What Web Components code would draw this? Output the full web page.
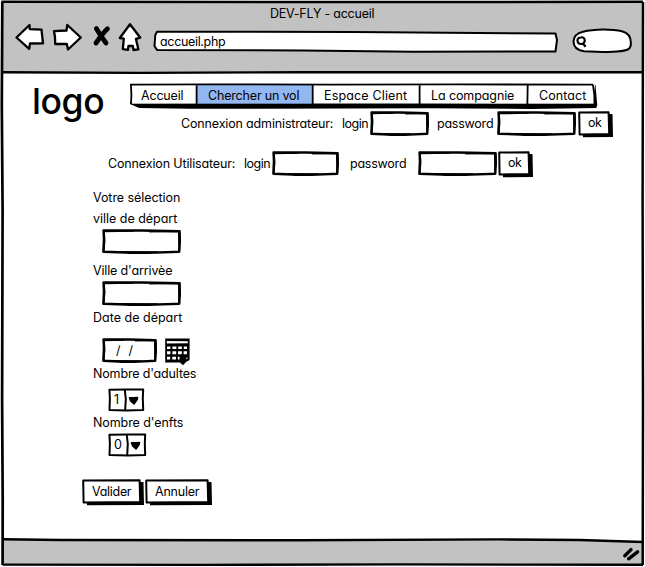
<!DOCTYPE html>
<html lang="fr">
<head>
<meta charset="utf-8">
<title>DEV-FLY - accueil</title>
<style>
html, body { margin: 0; background: #fff; overflow: hidden; }
body { font-family: Inter, "Noto Sans", sans-serif; font-size: 13px; color: #000; font-feature-settings: "cv11"; }
</style>
</head>
<body>
<wire-page></wire-page>
<script>
const num = (el, name, d = 0) => parseFloat(el.getAttribute(name) ?? d);

/* Label fitted to a given width through its letter spacing */
class WireText extends HTMLElement {
  connectedCallback() {
    const size = num(this, 'size', 12.5), w = num(this, 'w'), lh = num(this, 'lh', 16);
    const root = this.attachShadow({ mode: 'open' });
    root.innerHTML = `<style>
      :host { display: block; flex: none; width: ${w}px; height: ${lh}px; font-size: ${size}px; line-height: ${lh}px; white-space: pre; }
      span { display: inline-block; margin-top: 1px; }
    </style><span><slot></slot></span>`;
    const span = root.querySelector('span');
    const n = this.textContent.length;
    const natural = span.getBoundingClientRect().width;
    span.style.letterSpacing = ((w + .3 - natural) / n) + 'px';
  }
}

/* Hand-drawn text field */
class WireField extends HTMLElement {
  connectedCallback() {
    const w = num(this, 'w'), h = num(this, 'h', 25);
    this.attachShadow({ mode: 'open' }).innerHTML = `<style>
      :host { display: grid; flex: none; width: ${w}px; height: ${h}px; }
      svg, div { grid-area: 1 / 1; }
      div { display: flex; align-items: center; }
      ::slotted(*) { margin-top: -2px; }
    </style>
    <svg width="${w}" height="${h}" fill="none" stroke="#000" stroke-width="2.5" stroke-linejoin="round">
      <path fill="#fff" d="M1.6 1.6 L${w * .5} 1.5 L${w - 1.4} 2.2 L${w - 1.2} ${h * .5} L${w - 1.8} ${h - 2.2} Q${w * .5} ${h - .6} ${w * .3} ${h - 1.5} L1.4 ${h - 2.3} L2 ${h * .4}Z"/>
      <path stroke-width="1.7" d="M2 2.5 L${w * .4} 1.9 M2 3 L2.5 ${h * .5} L1.7 ${h - 3} M${w * .6} 2.6 L${w - 2} 2.1 M${w - 2.2} 3 L${w - 1.8} ${h - 3} M${w * .2} ${h - 2.2} L${w * .7} ${h - 1.9}"/>
    </svg><div><slot></slot></div>`;
  }
}

/* Button with a solid offset shadow */
class WireButton extends HTMLElement {
  connectedCallback() {
    const w = num(this, 'w'), h = 27;
    this.attachShadow({ mode: 'open' }).innerHTML = `<style>
      :host { display: grid; flex: none; width: ${w}px; height: ${h}px; }
      svg, div { grid-area: 1 / 1; }
      div { padding: ${num(this, 'py', 4)}px 0 0 ${num(this, 'px', 10)}px; }
    </style>
    <svg width="${w}" height="${h}">
      <path d="M4.5 4 L${w - .5} 3 L${w} ${h - 1} L5 ${h - .8}Z"/>
      <path d="M1.2 1.5 L${w - 4.4} 1.2 L${w - 3.8} ${h - 4} L1.6 ${h - 3.6}Z" fill="#fff" stroke="#000" stroke-width="2" stroke-linejoin="round"/>
    </svg><div><slot></slot></div>`;
  }
}

/* Small number selector with a drop-down arrow */
class WireSelect extends HTMLElement {
  connectedCallback() {
    const w = num(this, 'w');
    const d = num(this, 'split');
    this.attachShadow({ mode: 'open' }).innerHTML = `<style>
      :host { display: grid; flex: none; width: ${w}px; height: 24px; }
      svg, div { grid-area: 1 / 1; }
      div { padding: 3px 0 0 6px; }
    </style>
    <svg width="${w}" height="24" stroke="#000" stroke-width="2" stroke-linejoin="round">
      <path fill="#fff" d="M1.4 1.8 L${w * .5} 1.6 L${w - 1.8} 1.6 L${w - 2.2} 10 L${w - 1.8} 22 L${w * .5} 22.4 L1.5 22 L1.9 10Z"/>
      <path fill="none" d="M${d - 1.2} 2 L${d - .2} 11 L${d - .8} 22"/>
      <path stroke-width="1.4" d="M${d + 3.4} 9.8 L${d + 7} 9.8 L${d + 11.6} 9.4 L${d + 11.2} 11.5 L${d + 8} 16 L${d + 4.6} 13Z"/>
    </svg><div><slot></slot></div>`;
  }
}

class WireCalendar extends HTMLElement {
  connectedCallback() {
    this.attachShadow({ mode: 'open' }).innerHTML = `<style>:host { display: block; flex: none; width: 26px; height: 28px; }</style>
    <svg width="26" height="28">
      <path d="M.2 .6 L24.6 .6 L24.6 22 L21 24 L18 27.3 L15 24.6 L.2 24.4Z"/>
      <path fill="#fff" d="M1.8 3 L22.9 3.2 L22.8 5.2 L1.9 5.4Z
       M2 8.4h3.4v2.5H2z M7.4 8.4h4v2.5h-4z M13.2 8.4h3.7v2.5h-3.7z M18.8 8.4h3.2v2.5h-3.2z
       M2 13.2h3.4v3H2z M7.4 13.2h3.8v3H7.4z M13 13.2h3.8v3H13z M18.6 13.2h3.4v3h-3.4z
       M2 18.8h3.2v2.7H2z M7.2 18.8H11v2.7H7.2z M12.8 18.8h1.8v2.7h-1.8z M21.4 19.4h1v1.6h-1z"/>
    </svg>`;
  }
}

/* Navigation bar; one slot per menu entry */
class WireNav extends HTMLElement {
  connectedCallback() {
    this.attachShadow({ mode: 'open' }).innerHTML = `<style>
      :host { display: grid; flex: none; width: 469px; height: 27px; }
      svg, nav { grid-area: 1 / 1; }
      nav { display: grid; grid-template-columns: 67px 116px 107px 108px 71px; }
      ::slotted(*) { margin: 4px 0 0 11px; }
    </style>
    <svg width="469" height="27">
      <path d="M0 19 L467 19 L466.5 25 L400 26 L300 25.3 L60 25.8 L9 25 L0 21Z"/>
      <path d="M460 1 L465.5 2 L467.3 23 L462 23Z"/>
      <path d="M.6 2 L465 1.7 L464 13 L464.6 21 L398 21 L300 20.8 L150 20.8 L1.2 21Z" fill="#fff"/>
      <path d="M67 2 H183 V21 H67Z" fill="#93b7f1"/>
      <path d="M.3 1.6 L80 1.3 L200 1.7 L330 1.4 L463 1.7 M.9 1 L1.4 12 L1 21 M66.6 2 V21 M182.7 2 V21 M289.6 2 V21 M397.7 2 L397.3 24 M463 2 L464.3 12 L464.5 22" fill="none" stroke="#000" stroke-width="1.8"/>
      <path d="M1 21.2 L466 21.2" stroke="#000" stroke-width="1"/>
    </svg><nav><slot></slot></nav>`;
  }
}

class WireToolbar extends HTMLElement {
  connectedCallback() {
    this.attachShadow({ mode: 'open' }).innerHTML = `<style>
      :host { display: flex; flex-direction: column; height: 74px; }
      .title { padding: 5px 0 0 270px; height: 16px; }
      .tools { display: flex; padding: 1px 0 0 15px; }
      svg { flex: none; }
      .url { display: grid; width: 405px; margin: 8px 0 0 10px; }
      .url > * { grid-area: 1 / 1; }
      .url wire-text { margin: 3px 0 0 7px; }
      .find { margin: 6px 0 0 14px; }
    </style>
    <div class="title"><wire-text w="104">DEV-FLY - accueil</wire-text></div>
    <div class="tools">
      <svg width="128" height="32" fill="#fff" stroke="#000" stroke-width="2.3" stroke-linejoin="round" stroke-linecap="round">
        <path d="M1.5 15.5 L14.5 3 L14.8 7.2 L26.5 7.6 L28 21.3 L15 21.5 L14.2 26.8Z"/>
        <path d="M39 9.2 L51.5 8.5 L52.3 3 L65.8 15.5 L53 27.5 L51.8 22 L40.2 22 L40 15Z"/>
        <path d="M81.3 6.5 C84 11 88 17 91 21 M92.5 6.8 C88 11 84.5 16 81 21" fill="none" stroke-width="4.8"/>
        <path d="M115 2.2 L125.3 15.7 L120.9 16.8 L123.4 27.4 L118.5 28 L117.8 24 L113.4 24 L113 27.8 L107.8 27.2 L108.8 16.6 L104.8 16Z"/>
      </svg>
      <div class="url">
        <svg width="405" height="23"><path d="M4 1.7 L200 2 L402.5 3.6 L404 10 L402.5 21.5 L260 21.8 L150 20.4 L4 20 L1.5 16 L2.3 5Z" fill="#fff" stroke="#000" stroke-width="2" stroke-linejoin="round"/></svg>
        <wire-text w="65">accueil.php</wire-text>
      </div>
      <svg class="find" width="62" height="26" fill="none" stroke="#000" stroke-width="2">
        <path d="M11 3.8 C22 .8 40 .8 50 3.2 C57 5 59 9 58.9 15 C59 22 55 22.5 45 23.6 C35 24.8 27 23.6 12 23.3 C4 22 1.5 18 1.5 13.2 C2 7.5 5 5.3 11 3.8Z" fill="#fff"/>
        <path d="M9 9.3 C12.5 9 13 11.5 12.6 13.4 C12 16.4 7 17 5.8 14.2 C4.6 11.5 6.2 9.5 9 9.3 M10.4 14.8 L13.6 18.8" stroke-width="2.2"/>
      </svg>
    </div>`;
  }
}

/* Window outline: toolbar, body and status bar */
class WireWindow extends HTMLElement {
  connectedCallback() {
    this.attachShadow({ mode: 'open' }).innerHTML = `<style>
      :host { display: grid; width: 645px; height: 567px; grid-template: 567px / 645px; }
      svg, .inner { grid-area: 1 / 1; }
      .inner { display: grid; grid-template-rows: 74px 1fr; min-width: 0; }
    </style>
    <svg width="645" height="567" fill="none" stroke="#000">
      <path d="M3 2 H643 V73 H3Z M3 540 L500 539.6 L643 541.8 V565 H3Z" fill="#c2c2c2" stroke="none"/>
      <path d="M1.5 1.8 L400 2.1 L643 1.8" stroke-width="2.5"/>
      <path d="M2.3 1.5 L1.8 105 L2.6 210 L2.1 400 L2.7 500 L2.6 565" stroke-width="2.7"/>
      <path d="M643 2 L642.6 200 L643 400 L642.7 565" stroke-width="2.5"/>
      <path d="M3 72.3 L140 72.9 L300 72.2 L643 72.3 M3 539.3 L60 540 L300 540.3 L500 539.4 L580 540 L643 542 M2.5 564.6 L200 564.9 L400 564.4 L643 564.8" stroke-width="2.4"/>
      <path d="M624.8 555.8 L631 549.6 M628.6 558.8 L637.6 551.8" stroke-width="3.4" stroke-linecap="round"/>
    </svg>
    <div class="inner"><wire-toolbar></wire-toolbar><slot></slot></div>`;
  }
}

class WirePage extends HTMLElement {
  connectedCallback() {
    this.attachShadow({ mode: 'open' }).innerHTML = `<style>
      :host { display: block; }
      main { display: flex; flex-direction: column; }
      .head { display: flex; height: 77px; }
      .logo { margin: 4px 0 0 32px; font-weight: 500; }
      .right { display: flex; flex-direction: column; padding-top: 9px; margin-left: 26px; }
      .row { display: flex; }
      .row > wire-text { margin-top: 4px; }
      .admin { padding: 1px 0 0 51px; margin-right: -20px; }
      .user { padding-left: 108px; height: 38px; }
      form { display: flex; flex-direction: column; padding-left: 93px; }
      form > wire-field { margin-left: 9px; }
      form > wire-select { margin-left: 15px; }
      .date { padding-left: 9px; gap: 8px; }
      .actions { margin: 22px 0 0 -11px; gap: 0; }
    </style>
    <wire-window><main>
      <div class="head">
        <wire-text class="logo" size="35.5" w="72" lh="46">logo</wire-text>
        <div class="right">
          <wire-nav>
            <wire-text w="42">Accueil</wire-text><wire-text w="91">Chercher un vol</wire-text><wire-text w="83">Espace Client</wire-text><wire-text w="83">La compagnie</wire-text><wire-text w="47">Contact</wire-text>
          </wire-nav>
          <div class="row admin">
            <wire-text w="152">Connexion administrateur:</wire-text>
            <wire-text w="26" style="margin-left:9px">login</wire-text>
            <wire-field w="59" style="margin-left:2px"></wire-field>
            <wire-text w="56" style="margin-left:8px">password</wire-text>
            <wire-field w="79" style="margin-left:4px"></wire-field>
            <wire-button w="35" px="10" py="3" style="margin-left:2px"><wire-text w="13">ok</wire-text></wire-button>
          </div>
        </div>
      </div>
      <div class="row user">
        <wire-text w="127">Connexion Utilisateur:</wire-text>
        <wire-text w="26" style="margin-left:9px">login</wire-text>
        <wire-field w="67" style="margin-left:2px"></wire-field>
        <wire-text w="56" style="margin-left:11px">password</wire-text>
        <wire-field w="79" style="margin-left:12px"></wire-field>
        <wire-button w="35" px="10" py="3" style="margin-left:1px"><wire-text w="13">ok</wire-text></wire-button>
      </div>
      <form>
        <wire-text w="87">Votre sélection</wire-text>
        <wire-text w="84" style="margin-top:5px">ville de départ</wire-text>
        <wire-field w="79" style="margin-top:3px"></wire-field>
        <wire-text w="79" style="margin-top:8px">Ville d'arrivèe</wire-text>
        <wire-field w="79" style="margin-top:3px"></wire-field>
        <wire-text w="89" style="margin-top:3px">Date de départ</wire-text>
        <div class="row date" style="margin-top:13px">
          <wire-field w="55"><wire-text w="17" style="margin-left:14px">/  /</wire-text></wire-field>
          <wire-calendar></wire-calendar>
        </div>
        <wire-text w="103" style="margin-top:-1px">Nombre d'adultes</wire-text>
        <wire-select w="37" split="18" style="margin-top:7px"><wire-text w="6">1</wire-text></wire-select>
        <wire-text w="90" style="margin-top:2px">Nombre d'enfts</wire-text>
        <wire-select w="39" split="20" style="margin-top:3px"><wire-text w="8">0</wire-text></wire-select>
        <div class="row actions">
          <wire-button w="62" px="10"><wire-text w="39">Valider</wire-text></wire-button>
          <wire-button w="67" px="10" style="margin-left:1px"><wire-text w="44">Annuler</wire-text></wire-button>
        </div>
      </form>
    </main></wire-window>`;
  }
}

customElements.define('wire-text', WireText);
customElements.define('wire-field', WireField);
customElements.define('wire-button', WireButton);
customElements.define('wire-select', WireSelect);
customElements.define('wire-calendar', WireCalendar);
customElements.define('wire-nav', WireNav);
customElements.define('wire-toolbar', WireToolbar);
customElements.define('wire-window', WireWindow);
customElements.define('wire-page', WirePage);
</script>
</body>
</html>
